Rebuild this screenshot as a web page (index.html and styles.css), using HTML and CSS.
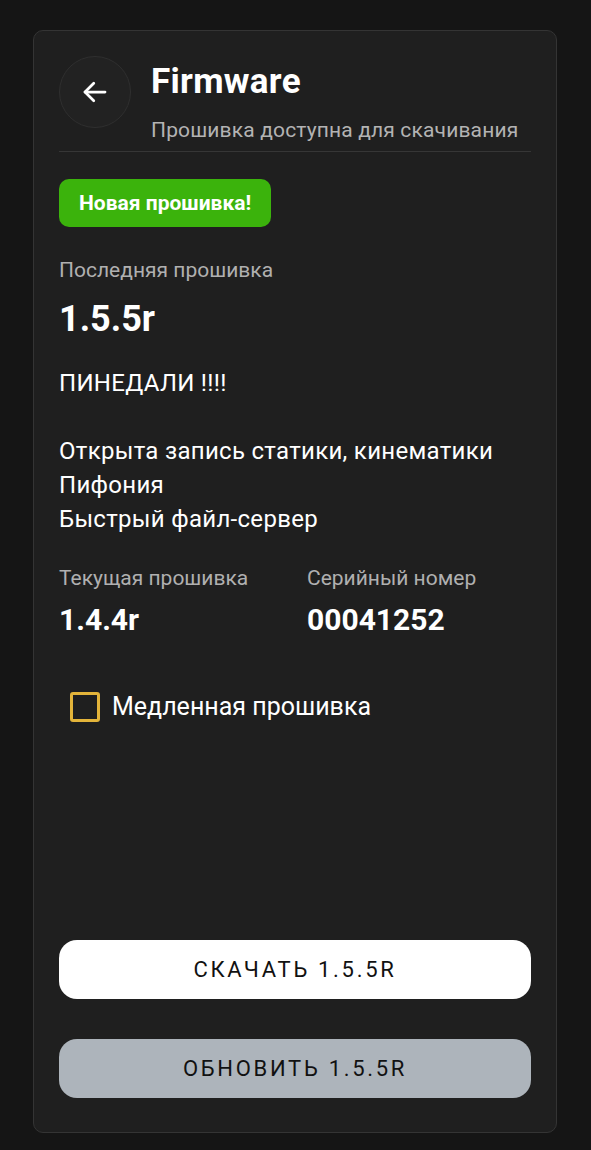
FILE: index.html
```html
<!DOCTYPE html>
<html lang="ru">
<head>
    <meta charset="UTF-8">
    <meta name="viewport" content="width=device-width, initial-scale=1.0">
    <title>Firmware</title>
    <link rel="stylesheet" href="styles.css">
</head>
<body>
    <div class="fw-card">
        <div class="fw-header">
            <button class="back-btn" aria-label="Назад">
                <svg width="30" height="30" viewBox="0 0 24 24" fill="none" stroke="#fff" stroke-width="2.2" stroke-linecap="round" stroke-linejoin="round">
                    <path d="M20 12H4"/>
                    <path d="M11 5l-7 7 7 7"/>
                </svg>
            </button>
            <div class="header-text">
                <h1>Firmware</h1>
                <div class="subtitle">Прошивка доступна для скачивания</div>
            </div>
        </div>

        <div class="fw-body">
            <span class="badge">Новая прошивка!</span>

            <div class="label latest-label">Последняя прошивка</div>
            <div class="version-big">1.5.5r</div>

            <div class="notes">
                <p>ПИНЕДАЛИ !!!!</p>
                <p>Открыта запись статики, кинематики<br>Пифония<br>Быстрый файл-сервер</p>
            </div>

            <div class="info-grid">
                <div>
                    <div class="label">Текущая прошивка</div>
                    <div class="value">1.4.4r</div>
                </div>
                <div>
                    <div class="label">Серийный номер</div>
                    <div class="value">00041252</div>
                </div>
            </div>

            <label class="check-row">
                <span class="checkbox"></span>
                Медленная прошивка
            </label>
        </div>

        <div class="actions">
            <button class="btn btn-download">Скачать 1.5.5r</button>
            <button class="btn btn-update">Обновить 1.5.5r</button>
        </div>
    </div>
</body>
</html>
```

FILE: styles.css
```css
html, body {
    height: 100%;
}

body {
    margin: 0;
    padding: 30px 34px 17px 33px;
    box-sizing: border-box;
    background-color: #151515;
    font-family: Roboto, "Noto Sans", sans-serif;
    color: #fff;
}

.fw-card {
    height: 100%;
    box-sizing: border-box;
    display: flex;
    flex-direction: column;
    padding: 25px 25px 34px 25px;
    background-color: #1f1f1f;
    border: 1px solid #343434;
    border-radius: 10px;
}

.fw-header {
    display: flex;
    gap: 20px;
    padding-bottom: 8px;
    border-bottom: 1px solid #363636;
}

.back-btn {
    width: 72px;
    height: 72px;
    flex-shrink: 0;
    display: flex;
    align-items: center;
    justify-content: center;
    padding: 0;
    background-color: #222;
    border: 1px solid #2f2f2f;
    border-radius: 50%;
    cursor: pointer;
}

.header-text h1 {
    margin: 6px 0 0 0;
    font-size: 35px;
    line-height: 40px;
    font-weight: 700;
    letter-spacing: 0.3px;
}

.subtitle {
    margin-top: 15px;
    font-size: 21px;
    line-height: 26px;
    letter-spacing: 0.15px;
    color: #b3b3b3;
}

.fw-body {
    padding-top: 27px;
}

.badge {
    display: block;
    width: fit-content;
    padding: 12px 20px;
    background-color: #3bb30c;
    border-radius: 10px;
    font-size: 21px;
    line-height: 24px;
    font-weight: 700;
}

.label {
    font-size: 21px;
    line-height: 26px;
    color: #b0b0b0;
}

.latest-label {
    margin-top: 30px;
}

.version-big {
    margin-top: 15px;
    font-size: 36px;
    line-height: 42px;
    font-weight: 700;
}

.notes {
    margin-top: 26px;
    font-size: 24px;
    line-height: 34px;
    letter-spacing: 0.3px;
}

.notes p {
    margin: 0 0 34px 0;
}

.notes p:last-child {
    margin-bottom: 0;
}

.info-grid {
    display: grid;
    grid-template-columns: 248px 1fr;
    margin-top: 29px;
}

.value {
    margin-top: 12px;
    font-size: 30px;
    line-height: 34px;
    font-weight: 700;
}

.check-row {
    display: flex;
    align-items: center;
    gap: 12px;
    margin: 55px 0 0 11px;
    font-size: 25px;
    line-height: 30px;
}

.checkbox {
    width: 30px;
    height: 30px;
    box-sizing: border-box;
    border: 3px solid #e3b43a;
    border-radius: 3px;
}

.actions {
    margin-top: auto;
    display: flex;
    flex-direction: column;
    gap: 40px;
}

.btn {
    height: 59px;
    border: none;
    border-radius: 18px;
    font-family: Roboto, "Noto Sans", sans-serif;
    font-size: 22px;
    font-weight: 400;
    letter-spacing: 2.7px;
    text-transform: uppercase;
    color: #111;
    cursor: pointer;
}

.btn-download {
    background-color: #fff;
}

.btn-update {
    background-color: #adb4bb;
}
```
